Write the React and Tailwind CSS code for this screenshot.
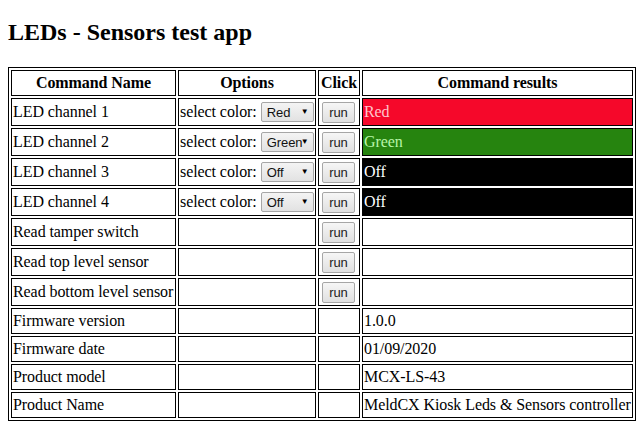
import React from 'react';

const serif = "font-['Liberation_Serif',serif]";
const sans = "font-['Liberation_Sans',Arial,sans-serif]";

const rows = [
    { name: 'LED channel 1', color: 'Red', run: true, result: 'Red', tone: 'red' },
    { name: 'LED channel 2', color: 'Green', run: true, result: 'Green', tone: 'green' },
    { name: 'LED channel 3', color: 'Off', run: true, result: 'Off', tone: 'off' },
    { name: 'LED channel 4', color: 'Off', run: true, result: 'Off', tone: 'off' },
    { name: 'Read tamper switch', run: true, result: '' },
    { name: 'Read top level sensor', run: true, result: '' },
    { name: 'Read bottom level sensor', run: true, result: '' },
    { name: 'Firmware version', result: '1.0.0' },
    { name: 'Firmware date', result: '01/09/2020' },
    { name: 'Product model', result: 'MCX-LS-43' },
    { name: 'Product Name', result: 'MeldCX Kiosk Leds & Sensors controller' },
];

const toneClass = {
    red: 'bg-[#f5082a] text-[#ffc4cc]',
    green: 'bg-[#26840f] text-[#b8f5a8]',
    off: 'bg-black text-white',
};

// looks like the native dropdown, drawn by hand so it renders the same everywhere
function ColorSelect({ value }) {
    return (
        <span
            role="combobox"
            className={`relative ml-[4px] flex items-center w-[53px] h-[20px] pl-[5px] text-[13px] leading-[15px] text-[#111] border border-[#a6a6a6] rounded-[2px] bg-gradient-to-b from-[#f4f4f4] to-[#e2e2e2] ${sans}`}
        >
            {value}
            <span className="absolute right-[4px] top-[3px] text-[8px] leading-[12px] text-black">▼</span>
        </span>
    );
}

function RunButton() {
    return (
        <button className={`ml-[2px] w-[33px] h-[21px] text-[13px] leading-[19px] text-[#222] border border-[#a6a6a6] rounded-[2px] bg-gradient-to-b from-[#f6f6f6] to-[#e0e0e0] ${sans}`}>
            run
        </button>
    );
}

export default function App() {
    const cell = 'border border-black p-[1px] align-middle';

    return (
        <div className={`px-[8px] pt-[18px] bg-white text-black text-[16px] tracking-[-0.08px] ${serif}`}>
            <h2 className="text-[24px] leading-[28px] font-bold tracking-normal">LEDs - Sensors test app</h2>

            <table className="mt-[21px] w-[628px] border border-black border-separate border-spacing-[2px] table-fixed">
                <thead>
                    <tr>
                        <th className={`${cell} w-[165px] text-center font-bold`}><div className="h-[22px] leading-[22px]">Command Name</div></th>
                        <th className={`${cell} w-[138px] text-center font-bold`}><div className="h-[22px] leading-[22px]">Options</div></th>
                        <th className={`${cell} w-[42px] text-center font-bold`}><div className="h-[22px] leading-[22px]">Click</div></th>
                        <th className={`${cell} text-center font-bold`}><div className="h-[22px] leading-[22px]">Command results</div></th>
                    </tr>
                </thead>
                <tbody>
                    {rows.map((row) => {
                        const h = row.run ? 'h-[24px]' : 'h-[22px]';
                        return (
                            <tr key={row.name}>
                                <td className={cell}>
                                    <div className={`${h} flex items-center whitespace-nowrap`}>{row.name}</div>
                                </td>
                                <td className={cell}>
                                    <div className={`${h} flex items-center whitespace-nowrap`}>
                                        {row.color && (
                                            <>
                                                <span>select color:</span>
                                                <ColorSelect value={row.color} />
                                            </>
                                        )}
                                    </div>
                                </td>
                                <td className={cell}>
                                    <div className={`${h} flex items-center`}>{row.run && <RunButton />}</div>
                                </td>
                                <td className={`${cell} ${row.tone ? toneClass[row.tone] : ''}`}>
                                    <div className={`${h} flex items-center whitespace-nowrap`}>{row.result}</div>
                                </td>
                            </tr>
                        );
                    })}
                </tbody>
            </table>
        </div>
    );
}
